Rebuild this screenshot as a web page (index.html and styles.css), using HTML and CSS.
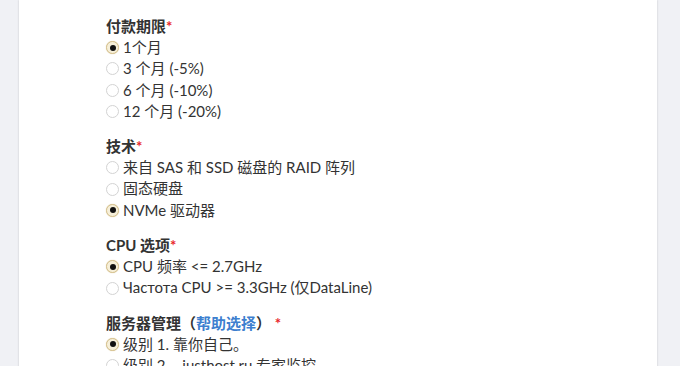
FILE: index.html
```html
<!DOCTYPE html>
<html lang="zh">
<head>
    <meta charset="UTF-8">
    <meta name="viewport" content="width=device-width, initial-scale=1.0">
    <title>服务器配置</title>
    <link rel="stylesheet" href="styles.css">
</head>
<body>
    <div class="panel">
        <form class="order-form">
            <div class="field">
                <div class="field-label">付款期限<span class="req">*</span></div>
                <label class="option"><input type="radio" name="period" checked> 1个月</label>
                <label class="option"><input type="radio" name="period"> 3 个月 (-5%)</label>
                <label class="option"><input type="radio" name="period"> 6 个月 (-10%)</label>
                <label class="option"><input type="radio" name="period"> 12 个月 (-20%)</label>
            </div>

            <div class="field">
                <div class="field-label">技术<span class="req">*</span></div>
                <label class="option"><input type="radio" name="tech"> 来自 SAS 和 SSD 磁盘的 RAID 阵列</label>
                <label class="option"><input type="radio" name="tech"> 固态硬盘</label>
                <label class="option"><input type="radio" name="tech" checked> NVMe 驱动器</label>
            </div>

            <div class="field">
                <div class="field-label">CPU 选项<span class="req">*</span></div>
                <label class="option"><input type="radio" name="cpu" checked> CPU 频率 &lt;= 2.7GHz</label>
                <label class="option"><input type="radio" name="cpu"> Частота CPU &gt;= 3.3GHz (仅DataLine)</label>
            </div>

            <div class="field">
                <div class="field-label">服务器管理（<a href="#">帮助选择</a>） <span class="req">*</span></div>
                <label class="option"><input type="radio" name="admin" checked> 级别 1. 靠你自己。</label>
                <label class="option"><input type="radio" name="admin"> 级别 2. - justhost.ru 专家监控</label>
            </div>
        </form>
    </div>
</body>
</html>
```

FILE: styles.css
```css
body {
    margin: 0;
    background: #f0f1f5;
    font-family: Lato, "Noto Sans CJK SC", sans-serif;
    font-size: 15px;
    color: #333;
    overflow: hidden;
}
.panel {
    margin-left: 19px;
    width: 638px;
    min-height: 400px;
    background: #fff;
    box-shadow: 0 0 2px rgba(0,0,0,0.18);
    padding: 16px 0 0 87px;
    box-sizing: border-box;
}
.field {
    margin-bottom: 14px;
}
.field-label {
    font-weight: bold;
    line-height: 21px;
    color: #333;
}
.field-label a {
    color: #3d7fcf;
    text-decoration: none;
}
.req {
    color: #e8262b;
}
.option {
    display: flex;
    align-items: center;
    line-height: 21.3px;
    height: 21.3px;
    color: #333;
}
.option input {
    appearance: none;
    -webkit-appearance: none;
    width: 13px;
    height: 13px;
    margin: 0 4px 0 0;
    border: 1px solid #d3d3d3;
    border-radius: 50%;
    background: #fff;
    box-sizing: border-box;
    position: relative;
    flex: none;
}
.option input:checked {
    border-color: #d6c290;
    background: #f6efd9;
    box-shadow: 0 0 1px #d6c290;
}
.option input:checked::after {
    content: "";
    position: absolute;
    left: 2.5px;
    top: 2.5px;
    width: 6px;
    height: 6px;
    border-radius: 50%;
    background: #111;
}
```
